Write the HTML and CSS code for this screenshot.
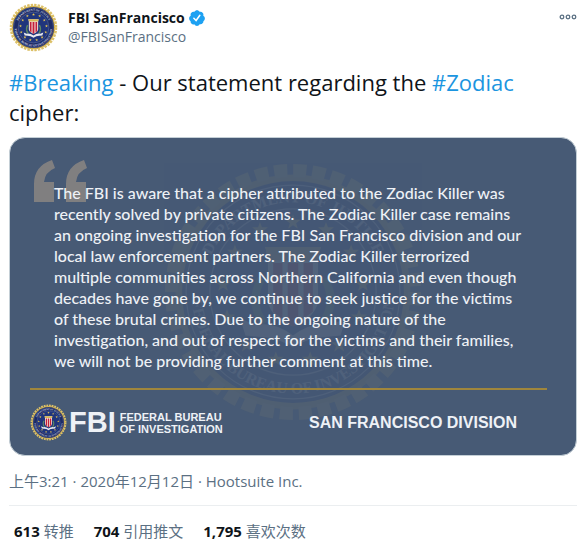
FILE: index.html
```html
<!DOCTYPE html>
<html lang="zh-CN">
<head>
    <meta charset="UTF-8">
    <meta name="viewport" content="width=device-width, initial-scale=1.0">
    <title>FBI SanFrancisco</title>
    <link rel="stylesheet" href="styles.css">
</head>
<body>
    <!-- Seal shared by the avatar, the card watermark and the card footer -->
    <svg class="defs" width="0" height="0" aria-hidden="true">
        <defs>
            <path id="star" d="M0-6 1.5-2 6-2 2.4 1 3.7 5 0 2.5-3.7 5-2.4 1-6-2-1.5-2z"/>
            <path id="arc-top" d="M-68 0A68 68 0 0 1 68 0"/>
            <path id="arc-bottom" d="M-77 0A77 77 0 0 0 77 0"/>
            <symbol id="seal" viewBox="-100 -100 200 200">
                <circle r="89" fill="#d2b04c"/>
                <circle r="92" fill="none" stroke="#dcc067" stroke-width="10" stroke-dasharray="10 4.45"/>
                <circle r="84" fill="#1c2b66"/>
                <circle r="81" fill="none" stroke="#b9bfd2" stroke-width="1"/>
                <circle r="63" fill="#20357c" stroke="#b9bfd2" stroke-width="1"/>
                <g class="seal-text">
                    <text><textPath href="#arc-top" startOffset="50%">DEPARTMENT OF JUSTICE</textPath></text>
                    <text><textPath href="#arc-bottom" startOffset="50%">FEDERAL BUREAU OF INVESTIGATION</textPath></text>
                </g>
                <g fill="#e6c452">
                    <use href="#star" x="0" y="-53"/>
                    <use href="#star" x="25" y="-47"/>
                    <use href="#star" x="44" y="-30"/>
                    <use href="#star" x="53" y="-6"/>
                    <use href="#star" x="50" y="19"/>
                    <use href="#star" x="35" y="40"/>
                    <use href="#star" x="13" y="51"/>
                    <use href="#star" x="-13" y="51"/>
                    <use href="#star" x="-35" y="40"/>
                    <use href="#star" x="-50" y="19"/>
                    <use href="#star" x="-53" y="-6"/>
                    <use href="#star" x="-44" y="-30"/>
                    <use href="#star" x="-25" y="-47"/>
                </g>
                <path d="M-24-10Q-34 8-22 24M24-10Q34 8 22 24" fill="none" stroke="#5f8a60" stroke-width="6"/>
                <path d="M-21-34H21L19-26V8Q16 20 0 26-16 20-19 8V-26z" fill="#f4efe6"/>
                <path d="M-21-34H21L19-24H-19z" fill="#d8b858"/>
                <path d="M-15-22h7v42l-7-5zM-4-22h8v46l-4 2-4-2zM8-22h7v37l-7 5z" fill="#c4203a"/>
                <path d="M-40 20-28 25Q-14 22 0 33 14 22 28 25L40 20 36 33 24 34Q12 34 0 42-12 34-24 34L-36 33z" fill="#e9e9ee"/>
            </symbol>
        </defs>
    </svg>

    <article class="tweet">
        <header class="tweet-header">
            <svg class="avatar" role="img" aria-label="FBI"><use href="#seal"/></svg>
            <div class="author">
                <a class="name" href="#">FBI SanFrancisco
                    <svg class="verified" viewBox="0 0 24 24" aria-hidden="true">
                        <path fill="#1da1f2" d="M22.5 12.5c0-1.58-.875-2.95-2.148-3.6.154-.435.238-.905.238-1.4 0-2.21-1.71-3.998-3.818-3.998-.47 0-.92.084-1.336.25C14.818 2.415 13.51 1.5 12 1.5s-2.816.917-3.437 2.25c-.415-.165-.866-.25-1.336-.25-2.11 0-3.818 1.79-3.818 4 0 .494.083.964.237 1.4-1.272.65-2.147 2.018-2.147 3.6 0 1.495.782 2.798 1.942 3.486-.02.17-.032.34-.032.514 0 2.21 1.708 4 3.818 4 .47 0 .92-.086 1.335-.25.62 1.334 1.926 2.25 3.437 2.25 1.512 0 2.818-.916 3.437-2.25.415.163.865.248 1.336.248 2.11 0 3.818-1.79 3.818-4 0-.174-.012-.344-.033-.513 1.158-.687 1.943-1.99 1.943-3.484z"/>
                        <path fill="none" stroke="#fff" stroke-width="2" stroke-linecap="round" d="M7.8 12.4l3 3 5-7"/>
                    </svg>
                </a>
                <a class="handle" href="#">@FBISanFrancisco</a>
            </div>
            <button class="more" type="button" aria-label="更多">
                <svg viewBox="0 0 18 6" aria-hidden="true">
                    <g fill="none" stroke="#5b7083" stroke-width="1.3">
                        <circle cx="3" cy="3" r="1.8"/>
                        <circle cx="9" cy="3" r="1.8"/>
                        <circle cx="15" cy="3" r="1.8"/>
                    </g>
                </svg>
            </button>
        </header>

        <p class="tweet-text"><a href="#">#Breaking</a> - Our statement regarding the <a href="#">#Zodiac</a> cipher:</p>

        <section class="card">
            <svg class="watermark" aria-hidden="true"><use href="#seal"/></svg>
            <svg class="quote" viewBox="0 0 54 43" aria-hidden="true">
                <path fill="#807f80" d="M18 0 21 8Q11 12 10 22H20V42H0V24Q0 6 18 0zM50 0 53 8Q43 12 42 22H52V42H32V24Q32 6 50 0z"/>
            </svg>
            <p class="statement">
                The FBI is aware that a cipher attributed to the Zodiac Killer was<br>
                recently solved by private citizens. The Zodiac Killer case remains<br>
                an ongoing investigation for the FBI San Francisco division and our<br>
                local law enforcement partners. The Zodiac Killer terrorized<br>
                multiple communities across Northern California and even though<br>
                decades have gone by, we continue to seek justice for the victims<br>
                of these brutal crimes. Due to the ongoing nature of the<br>
                investigation, and out of respect for the victims and their families,<br>
                we will not be providing further comment at this time.
            </p>
            <footer class="card-footer">
                <svg class="footer-seal" aria-hidden="true"><use href="#seal"/></svg>
                <strong class="fbi">FBI</strong>
                <span class="bureau">FEDERAL BUREAU<br>OF INVESTIGATION</span>
                <span class="division">SAN FRANCISCO DIVISION</span>
            </footer>
        </section>

        <p class="meta"><a href="#">上午3:21 · 2020年12月12日</a> · <a href="#">Hootsuite Inc.</a></p>

        <div class="stats">
            <a href="#"><strong>613</strong> 转推</a>
            <a href="#"><strong>704</strong> 引用推文</a>
            <a href="#"><strong>1,795</strong> 喜欢次数</a>
        </div>
    </article>
</body>
</html>
```
FILE: styles.css
```css
* {
    box-sizing: border-box;
    margin: 0;
    padding: 0;
}

body {
    font-family: "Open Sans", "Noto Sans CJK SC", sans-serif;
    font-size: 14px;
    color: #0f1419;
    background-color: #fff;
}

a {
    color: inherit;
    text-decoration: none;
}

.defs {
    position: absolute;
}

.seal-text {
    font-family: "Liberation Serif", serif;
    font-size: 12px;
    font-weight: bold;
    fill: #d5d9e4;
    text-anchor: middle;
}

.tweet {
    padding: 3px 8px 0 9px;
}

.tweet-header {
    display: flex;
    align-items: flex-start;
}

.avatar {
    width: 49px;
    height: 49px;
}

.author {
    flex: 1;
    padding: 5px 0 0 10px;
    line-height: 19px;
}

.name {
    display: flex;
    align-items: center;
    gap: 3px;
    font-weight: bold;
}

.verified {
    width: 18px;
    height: 18px;
}

.handle {
    color: #5b7083;
}

.more {
    border: none;
    background: none;
    padding: 11px 0 0;
    cursor: pointer;
}

.more svg {
    display: block;
    width: 18px;
    height: 6px;
}

.tweet-text {
    margin: 15px 0 10px;
    font-size: 22px;
    line-height: 30px;
}

.tweet-text a {
    color: #1b95e0;
}

.card {
    position: relative;
    overflow: hidden;
    padding: 44px 29px 14px 20px;
    border: 1px solid #c4cfd6;
    border-radius: 16px;
    background-color: #475a75;
    color: #eef1f6;
}

.watermark {
    position: absolute;
    top: 22px;
    left: 50%;
    width: 264px;
    height: 264px;
    margin-left: -132px;
    opacity: 0.06;
}

.quote {
    position: absolute;
    top: 22px;
    left: 24px;
    width: 54px;
    height: 43px;
}

.statement {
    position: relative;
    padding-left: 24px;
    font-family: Lato, sans-serif;
    font-size: 16px;
    font-weight: 500;
    line-height: 21px;
    white-space: nowrap;
}

.card-footer {
    position: relative;
    display: flex;
    align-items: center;
    margin-top: 17px;
    padding-top: 14px;
    border-top: 2px solid #a0863c;
    font-family: "Liberation Sans", Arial, sans-serif;
    font-weight: bold;
}

.footer-seal {
    width: 37px;
    height: 37px;
}

.fbi {
    margin: 0 4px 0 2px;
    font-size: 29px;
    line-height: 29px;
}

.bureau {
    font-size: 11px;
    line-height: 12px;
}

.division {
    margin: 0 30px 0 auto;
    font-size: 16px;
}

.meta {
    padding: 15px 0 14px;
    border-bottom: 1px solid #ebeef0;
    color: #5b7083;
    font-size: 15px;
    line-height: 20px;
}

.stats {
    display: flex;
    gap: 20px;
    padding: 15px 5px;
    color: #5b7083;
    font-size: 15px;
    line-height: 20px;
}

.stats strong {
    color: #0f1419;
}
```
